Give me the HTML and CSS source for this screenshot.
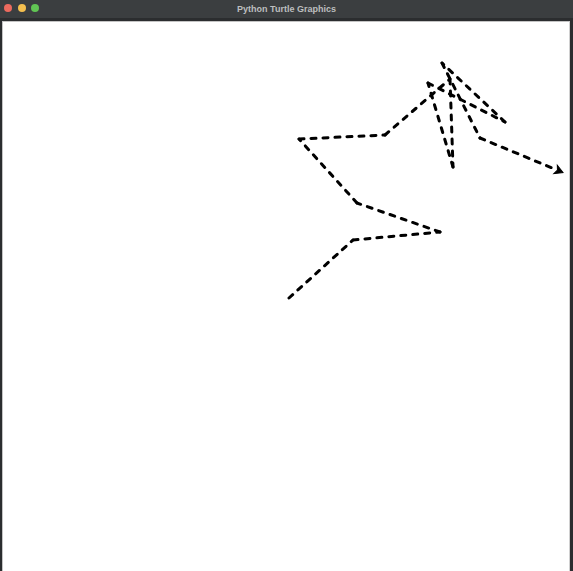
FILE: index.html
```html
<!DOCTYPE html>
<html>
<head>
<meta charset="utf-8">
<title>Python Turtle Graphics</title>
<link rel="stylesheet" href="styles.css">
</head>
<body>
<div class="window">
  <div class="titlebar">
    <div class="lights">
      <span class="light red"></span>
      <span class="light yellow"></span>
      <span class="light green"></span>
    </div>
    <div class="title">Python Turtle Graphics</div>
  </div>
  <div class="frame">
    <div class="canvas">
      <svg class="drawing" width="567" height="549" viewBox="3 22 567 549" xmlns="http://www.w3.org/2000/svg">
        <g class="pen">
          <line x1="289" y1="298" x2="353" y2="240"/>
          <line x1="353" y1="240" x2="440" y2="232"/>
          <line x1="440" y1="232" x2="357" y2="203"/>
          <line x1="357" y1="203" x2="299" y2="139"/>
          <line x1="299" y1="139" x2="385" y2="135"/>
          <line x1="385" y1="135" x2="450" y2="79"/>
          <line x1="450" y1="79" x2="453" y2="167"/>
          <line x1="453" y1="167" x2="428" y2="83"/>
          <line x1="428" y1="83" x2="505" y2="122"/>
          <line x1="505" y1="122" x2="442" y2="63"/>
          <line x1="442" y1="63" x2="480" y2="138"/>
          <line x1="480" y1="138" x2="557" y2="170"/>
        </g>
        <polygon class="turtle" points="0,0 -8,-4.5 -6,0 -8,4.5" transform="translate(563 172.5) rotate(22.3)"/>
      </svg>
    </div>
  </div>
</div>
</body>
</html>
```

FILE: styles.css
```css
html, body {
  margin: 0;
  padding: 0;
  background: #2b2d2f;
}

.window {
  width: 573px;
  height: 571px;
  display: flex;
  flex-direction: column;
  background: #2b2d2f;
  overflow: hidden;
}

.titlebar {
  height: 18px;
  flex: 0 0 18px;
  background: #3b3e40;
  position: relative;
  display: flex;
  align-items: center;
  justify-content: center;
}

.lights {
  position: absolute;
  left: 4px;
  top: 4px;
  display: flex;
  gap: 5.5px;
}

.light {
  width: 8px;
  height: 8px;
  border-radius: 50%;
  display: block;
}

.red { background: #ec6a5e; }
.yellow { background: #f4bf4f; }
.green { background: #61c554; }

.title {
  font-family: "Liberation Sans", Arial, sans-serif;
  font-weight: bold;
  font-size: 9px;
  color: #bdbebf;
  line-height: 18px;
}

.frame {
  flex: 1;
  display: flex;
  padding: 3px 3px 0 2px;
  min-height: 0;
}

.canvas {
  flex: 1;
  background: #ffffff;
  border-top: 1px solid #c4c4c4;
  border-left: 1px solid #c4c4c4;
  border-right: 1px solid #d0d0d0;
  overflow: hidden;
}

.drawing {
  display: block;
}

.pen line {
  stroke: #000000;
  stroke-width: 3;
  stroke-dasharray: 5 7;
  stroke-linecap: round;
  fill: none;
}

.turtle {
  fill: #000000;
  stroke: #000000;
  stroke-width: 1;
}
```
